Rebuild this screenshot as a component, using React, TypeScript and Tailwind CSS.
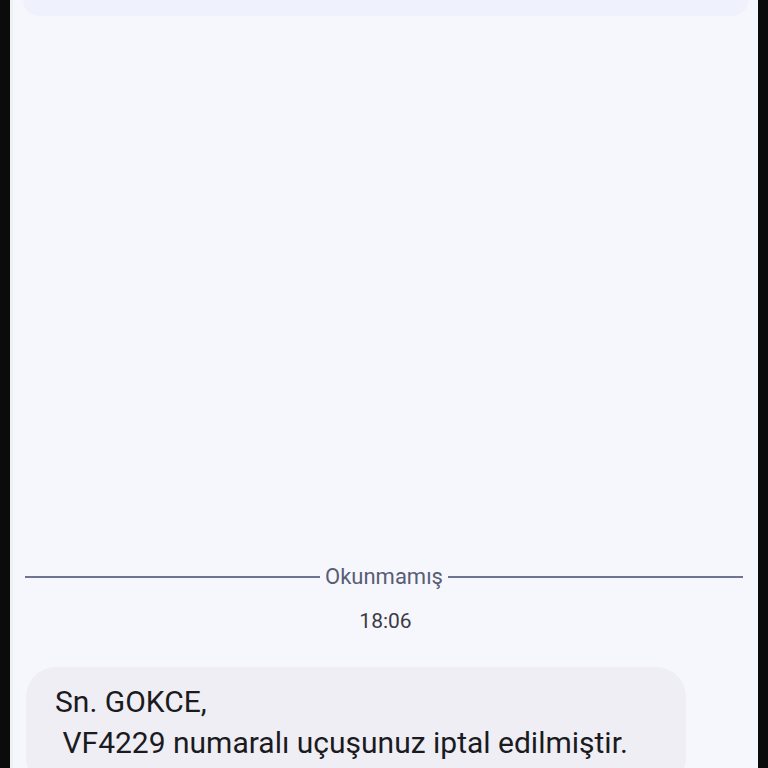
export default function App() {
  return (
    <div className="w-[768px] h-[768px] bg-[#0b0b0c] px-[10px] overflow-hidden" style={{ fontFamily: 'Roboto, "Noto Sans", sans-serif' }}>
      <div className="h-full bg-[#f6f7fc] flex flex-col border-l-[3px] border-[#eef0f4]">
        {/* previous message, cut off at top */}
        <div className="shrink-0 h-4 mx-[10px] rounded-b-[20px] bg-[#eff2fd]" />

        {/* unread divider */}
        <div className="shrink-0 mt-[550px] flex items-center gap-[5px] pl-[12px] pr-[15px]">
          <div className="flex-1 h-[2px] bg-[#6f7490]" />
          <span className="text-[22px] leading-[22px] text-[#585d76]">Okunmamış</span>
          <div className="flex-1 h-[2px] bg-[#6f7490]" />
        </div>

        <div className="shrink-0 mt-[21px] text-center text-[21px] leading-[24px] text-[#3b3c44]">18:06</div>

        {/* message bubble */}
        <div className="shrink-0 mt-[34px] ml-[13px] w-[660px] rounded-[30px] bg-[#efeef4] pt-[14px] px-[29px] pb-6 text-[30px] leading-[41px] text-[#1b1b1f]">
          <p>Sn. GOKCE,</p>
          <p>&nbsp;VF4229 numaralı uçuşunuz iptal edilmiştir.</p>
        </div>
      </div>
    </div>
  )
}
